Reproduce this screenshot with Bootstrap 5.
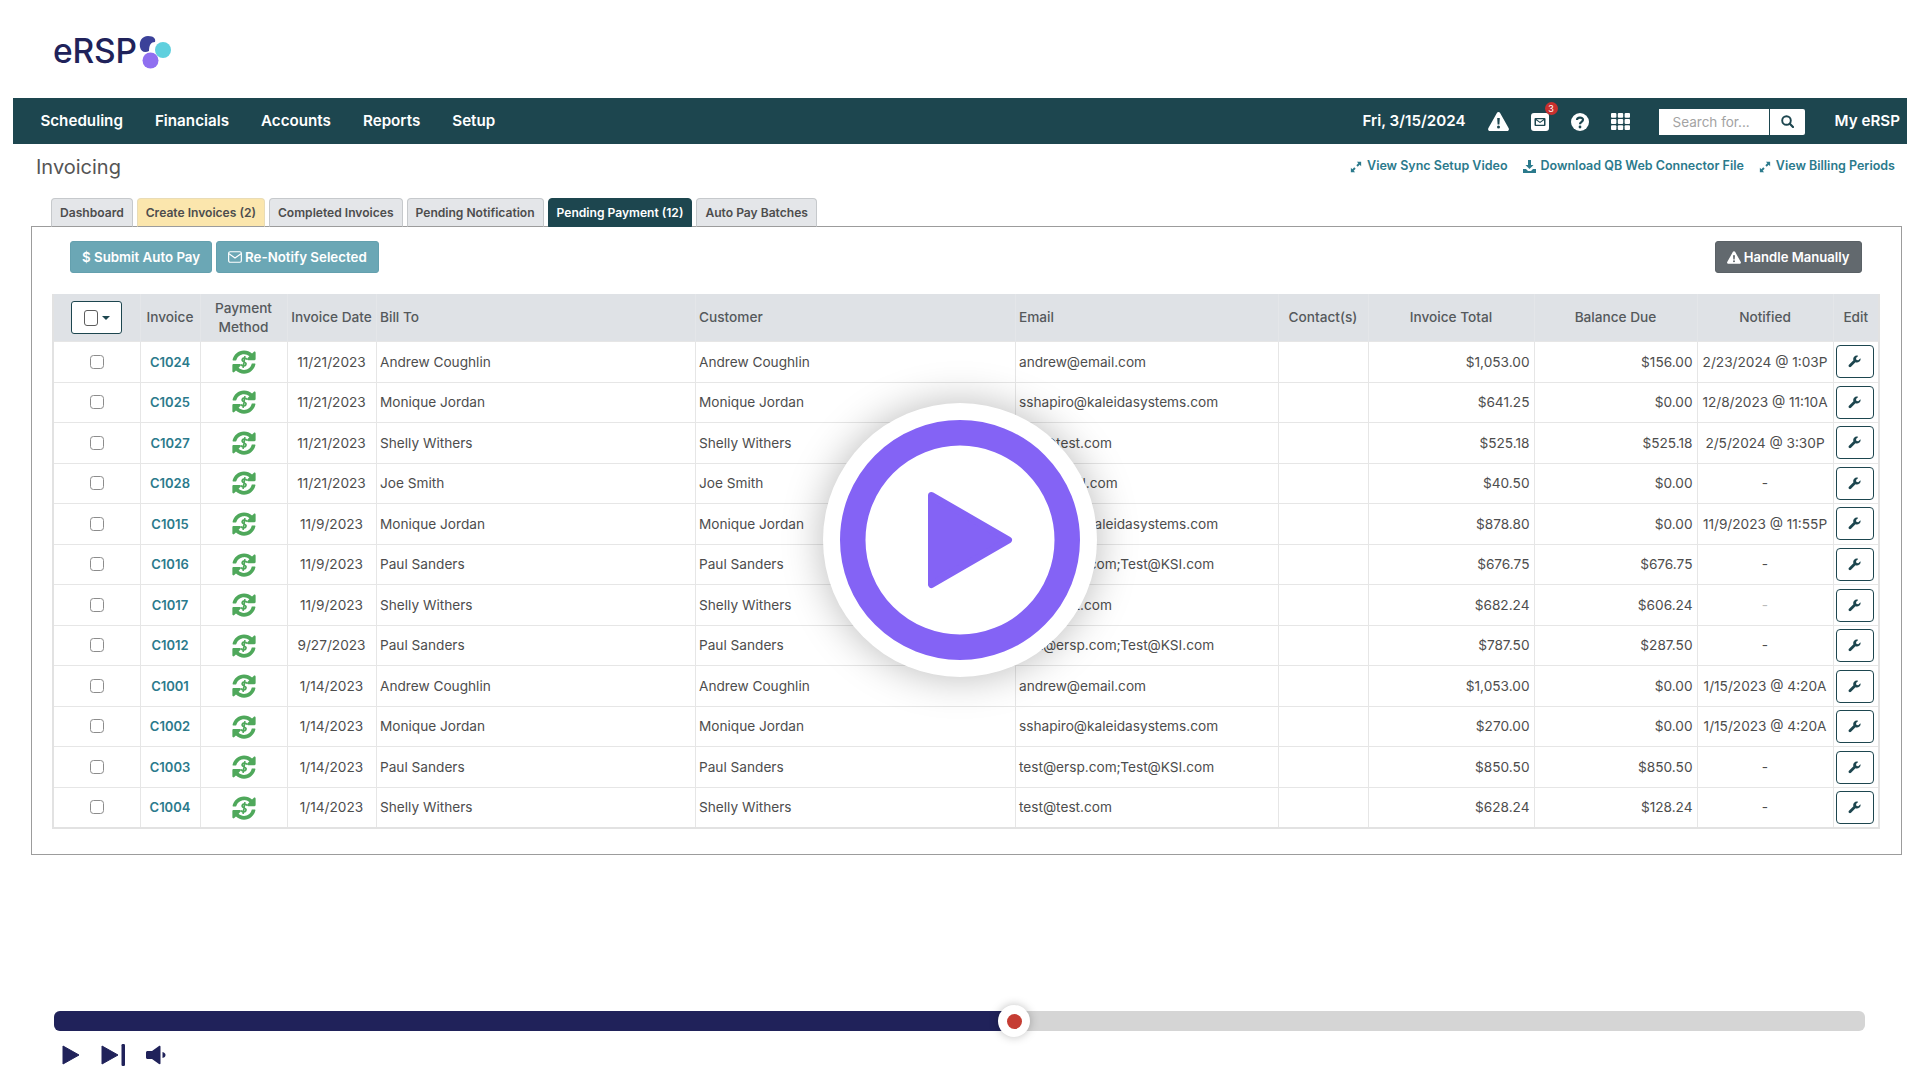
<!DOCTYPE html>
<html lang="en">
<head>
<meta charset="utf-8">
<title>eRSP Invoicing</title>
<link href="https://cdn.jsdelivr.net/npm/bootstrap@5.3.0/dist/css/bootstrap.min.css" rel="stylesheet">
<style>
html,body{height:100%}
body{font-family:Inter,"Liberation Sans",sans-serif;background:#fff;color:#4d4d4d;overflow:hidden;position:relative;width:1920px;height:1080px}
.logo-row{height:98px;padding:36px 0 0 53px;gap:2px;align-items:flex-start}
.logo-word{font-size:33.500px;font-weight:500;line-height:30px;color:#20225a;letter-spacing:-.2px}
.top-bar{margin:0 13px;height:46px;background:#1d464f;color:#fff;padding:1px 7px 0 27.400px;font-weight:600;font-size:15.200px}
.top-menu{gap:32px}
.top-menu a{color:#fff;text-decoration:none}
.top-tools{align-items:center}
.tool-date{margin-right:22px}
.tool-icon{display:block;margin-right:22px;position:relative}
.mail-wrap{width:18px;height:18px}
.mail-count{position:absolute;top:-11px;right:-9px;width:13px;height:13px;border-radius:50%;background:#c8302e;color:#fff;font-size:9px;line-height:13px;text-align:center;font-weight:400;padding:0}
.grid-icon{margin-right:21px}
.search-box{width:147.500px;height:26px;margin:0 28.500px 0 8px;flex-wrap:nowrap}
.search-box .form-control{height:26px;border:0;border-radius:0;font-size:13.500px;padding:0 14px;width:111.500px;flex:none;color:#555}
.search-box .form-control::placeholder{color:#a3a3a3}
.search-box .btn{width:36px;height:26px;padding:0;background:#fff;border:0;border-left:1px solid #1d464f;border-radius:0 2px 2px 0;display:flex;align-items:center;justify-content:center}
.title-row{height:54px;padding:0 25px 9px 36px;align-items:center}
.page-title{font-size:20px;font-weight:400;color:#555;margin:0}
.quick-links{gap:15px;font-size:12.500px;font-weight:600}
.quick-links a{color:#2b7a8c;text-decoration:none;display:flex;align-items:center;gap:5px}
.tab-strip{margin:0 0 0 51px;gap:4px;border:0;position:relative;z-index:1;height:29px}
.tab-strip .nav-link{height:29px;padding:0 8px;line-height:28px;font-size:12.080px;font-weight:600;color:#4d4d4d;background:#e4e6e9;border:1px solid #c6c9cc;border-bottom:1px solid #9c9c9c;border-radius:4px 4px 0 0;margin:0}
.tab-strip .nav-link.tab-warn{background:#fbe6ad;border-color:#e9dcb6 #e9dcb6 #9c9c9c}
.tab-strip .nav-link.active{background:#1d464f;color:#fff;border-color:#1d464f}
.work-panel{margin:-1px 18.500px 0 31px;height:629px;border:1px solid #9c9c9c;padding:14px 18px 0 20px;background:#fff}
.act-row{height:32px;margin:0 21px 0 18px}
.act-row .btn{height:32px;padding:0 11px;font-size:13.300px;font-weight:600;line-height:30px;border-radius:3px;display:inline-flex;align-items:center;gap:3px;color:#fff}
.act-row .act-gray{font-size:13.100px;background:#62696e;border:1px solid #5a6166}
.act-teal{background:#6ba7b5;border:1px solid #64a0ae}
.act-gap{gap:4px}
.bill-grid{table-layout:fixed;width:1826px;margin:21px 0 0 0;border-collapse:collapse;font-size:13.650px;color:#4d4d4d;border:2px solid #e2e2e2;border-top:0}
.bill-grid th{background:#dfe2e6;font-weight:500;height:47.500px;line-height:18.500px;padding:0 3px;text-align:center;color:#55595c;border:1px solid #e4e6e9;border-width:0 1px}
.bill-grid td{height:40.550px;padding:0 4px;border:1px solid #e6e6e6;vertical-align:middle;background:#fff}
.bill-grid .txt-l{text-align:left;padding-left:3.500px}
.bill-grid .txt-r{text-align:right}
.bill-grid .txt-c{text-align:center}
.bill-grid .edit-cell{padding:0 6px 0 2px;text-align:center}
.bill-grid a{color:#2b7a8c;font-weight:600;text-decoration:none;font-size:13px}
.faded-mark{color:#bbb}
.sel-btn{width:51px;height:33px;padding:0;background:#fff;border:1px solid #1d464f;border-radius:3px;display:inline-flex;align-items:center;justify-content:center;gap:4px}
.sel-box{width:14px;height:16px;border:1.500px solid #5d5d5d;border-radius:3px;display:block}
.sel-caret{width:0;height:0;border:4px solid transparent;border-top:4.500px solid #1d464f;border-bottom:0}
.row-check{width:14px;height:14px;margin:3px 0 0;border:1px solid #8c8c8c;border-radius:3px}
.edit-btn{width:38px;height:33px;padding:0;background:#fff;border:1px solid #1d464f;border-radius:4px;display:inline-flex;align-items:center;justify-content:center}
.player-zone{margin:156px 55px 0 54px;height:70px}
.seek-track{height:20px;background:#d5d5d5;border-radius:6px;position:relative}
.seek-fill{height:20px;width:960px;background:#20225a;border-radius:6px 0 0 6px}
.seek-thumb{position:absolute;left:944px;top:-6px;width:32px;height:32px;border-radius:50%;background:#fff;box-shadow:0 0 10px rgba(0,0,0,.25);display:flex;align-items:center;justify-content:center}
.seek-dot{width:15px;height:15px;border-radius:50%;background:#c53d33;display:block}
.player-keys{margin:13px 0 0 8px;align-items:center}
.key-play{margin-right:21px}
.key-next{margin-right:20px}
.big-play{position:absolute;left:823px;top:403px;width:274px;height:274px;border-radius:50%;background:#fff;box-shadow:0 0 42px rgba(0,0,0,.28);display:flex;align-items:center;justify-content:center}
</style>
</head>
<body>
<svg width="0" height="0" class="d-block position-absolute">
<defs>
<symbol id="sync" viewBox="0 0 512 512">
<path fill="#4fa85b" d="M370.720 133.280C339.458 104.008 298.888 87.962 255.848 88c-77.458.068-144.328 53.178-162.791 126.850-1.344 5.363-6.122 9.150-11.651 9.150H24.103c-7.498 0-13.194-6.807-11.807-14.176C33.933 94.924 134.813 8 256 8c66.448 0 126.791 26.136 171.315 68.685L463.030 40.970C478.149 25.851 504 36.559 504 57.941V192c0 13.255-10.745 24-24 24H345.941c-21.382 0-32.090-25.851-16.971-40.971l41.750-41.749zM32 296h134.059c21.382 0 32.090 25.851 16.971 40.971l-41.750 41.750c31.262 29.273 71.835 45.319 114.876 45.280 77.418-.070 144.315-53.144 162.787-126.849 1.344-5.363 6.122-9.150 11.651-9.150h57.304c7.498 0 13.194 6.807 11.807 14.176C478.067 417.076 377.187 504 256 504c-66.448 0-126.791-26.136-171.315-68.685L48.970 471.030C33.851 486.149 8 475.441 8 454.059V320c0-13.255 10.745-24 24-24z"/>
<path fill="none" stroke="#4fa85b" stroke-width="36" d="M318 205C308 178 275 170 250 174 218 179 205 212 226 236 244 256 288 258 298 285 307 314 282 338 252 340 226 342 203 330 194 306M276 130 236 382"/>
</symbol>
<symbol id="wrench" viewBox="0 0 16 16">
<path fill="#1d464f" d="M15.300 3.900 12.700 6.500 10.400 6 9.900 3.700 12.500 1.100C10.800.4 8.800.8 7.600 2 6.400 3.200 6.100 5 6.700 6.500L1.200 12C.5 12.700.5 13.800 1.200 14.500 1.900 15.200 3 15.200 3.700 14.500L9.200 9C10.800 9.700 12.700 9.400 14 8.100 15.300 6.900 15.800 5.400 15.300 3.900Z"/>
</symbol>
<symbol id="expand" viewBox="0 0 14 14">
<path fill="#2b7a8c" d="M8 1h5v5L11.300 4.300 9 6.600 7.400 5 9.700 2.700ZM6 13H1V8L2.700 9.700 5 7.400 6.600 9 4.300 11.300Z"/>
</symbol>
</defs>
</svg>

<header class="logo-row d-flex">
  <span class="logo-word">eRSP</span>
  <svg width="32" height="34" viewBox="0 0 32 34" aria-hidden="true">
    <path fill="#3b4199" d="M1 11C0 5 3 0 9 0 15 0 17 3 16 6 12 6 10 9 10 15 6 17 2 16 1 11Z"/>
    <circle fill="#5fd0de" cx="24" cy="14" r="8"/>
    <circle fill="#8f6ff0" cx="11.500" cy="24.500" r="8"/>
  </svg>
</header>

<nav class="navbar top-bar d-flex justify-content-between flex-nowrap">
  <div class="top-menu d-flex">
    <a href="#">Scheduling</a><a href="#">Financials</a><a href="#">Accounts</a><a href="#">Reports</a><a href="#">Setup</a>
  </div>
  <div class="top-tools d-flex">
    <span class="tool-date">Fri, 3/15/2024</span>
    <svg class="tool-icon" width="21" height="19" viewBox="0 0 21 19"><path fill="#fff" fill-rule="evenodd" d="M10.500 0C11.200 0 11.800.4 12.100 1L20.700 16.300C21.300 17.500 20.500 19 19.100 19H1.900C.5 19-.3 17.500.3 16.300L8.900 1C9.200.4 9.800 0 10.500 0ZM9.200 6 9.600 12.500H11.400L11.800 6ZM10.500 13.500A1.500 1.500 0 1 0 10.500 16.500 1.500 1.500 0 1 0 10.500 13.500Z"/></svg>
    <span class="tool-icon mail-wrap">
      <svg class="d-block" width="18" height="18" viewBox="0 0 18 18"><path fill="#fff" fill-rule="evenodd" d="M3 0H15A3 3 0 0 1 18 3V15A3 3 0 0 1 15 18H3A3 3 0 0 1 0 15V3A3 3 0 0 1 3 0ZM4.500 5A1 1 0 0 0 3.500 6V12A1 1 0 0 0 4.500 13H13.500A1 1 0 0 0 14.500 12V6A1 1 0 0 0 13.500 5ZM5 7.300 9 10 13 7.300V11.700H5ZM5.500 6.300H12.500L9 8.700Z"/></svg>
      <span class="badge mail-count">3</span>
    </span>
    <svg class="tool-icon" width="18" height="18" viewBox="0 0 18 18"><circle cx="9" cy="9" r="9" fill="#fff"/><path fill="none" stroke="#1d464f" stroke-width="2.200" d="M6 7C6 3.800 12 3.800 12 6.800 12 8.800 9 8.800 9 11.200"/><circle cx="9" cy="14" r="1.400" fill="#1d464f"/></svg>
    <svg class="tool-icon grid-icon" width="19" height="17" viewBox="0 0 19 17"><g fill="#fff"><rect x="0" width="5.400" height="4.800" rx="1"/><rect x="6.800" width="5.400" height="4.800" rx="1"/><rect x="13.600" width="5.400" height="4.800" rx="1"/><rect x="0" y="6.100" width="5.400" height="4.800" rx="1"/><rect x="6.800" y="6.100" width="5.400" height="4.800" rx="1"/><rect x="13.600" y="6.100" width="5.400" height="4.800" rx="1"/><rect x="0" y="12.200" width="5.400" height="4.800" rx="1"/><rect x="6.800" y="12.200" width="5.400" height="4.800" rx="1"/><rect x="13.600" y="12.200" width="5.400" height="4.800" rx="1"/></g></svg>
    <form class="input-group search-box" onsubmit="return false">
      <input class="form-control" type="text" placeholder="Search for...">
      <button class="btn" type="button" aria-label="Search"><svg width="13" height="13" viewBox="0 0 13 13"><circle cx="5.500" cy="5.500" r="4.300" fill="none" stroke="#1d464f" stroke-width="1.900"/><path stroke="#1d464f" stroke-width="2.200" stroke-linecap="round" d="M8.800 8.800 12 12"/></svg></button>
    </form>
    <span>My eRSP</span>
  </div>
</nav>

<div class="title-row d-flex justify-content-between">
  <h1 class="page-title">Invoicing</h1>
  <div class="quick-links d-flex">
    <a href="#"><svg width="12" height="12"><use href="#expand"/></svg>View Sync Setup Video</a>
    <a href="#"><svg width="13" height="13" viewBox="0 0 13 13"><path fill="#2b7a8c" d="M5 0H8V5H10.500L6.500 9 2.500 5H5ZM0 9H3L5 11H8L10 9H13V13H0Z"/></svg>Download QB Web Connector File</a>
    <a href="#"><svg width="12" height="12"><use href="#expand"/></svg>View Billing Periods</a>
  </div>
</div>

<ul class="nav nav-tabs tab-strip">
  <li class="nav-item"><a class="nav-link" href="#">Dashboard</a></li>
  <li class="nav-item"><a class="nav-link tab-warn" href="#">Create Invoices (2)</a></li>
  <li class="nav-item"><a class="nav-link" href="#">Completed Invoices</a></li>
  <li class="nav-item"><a class="nav-link" href="#">Pending Notification</a></li>
  <li class="nav-item"><a class="nav-link active" href="#">Pending Payment (12)</a></li>
  <li class="nav-item"><a class="nav-link" href="#">Auto Pay Batches</a></li>
</ul>

<main class="work-panel">
  <div class="act-row d-flex justify-content-between">
    <div class="d-flex act-gap">
      <button type="button" class="btn act-teal">$ Submit Auto Pay</button>
      <button type="button" class="btn act-teal"><svg width="14" height="12" viewBox="0 0 13 11"><rect x=".6" y=".6" width="11.800" height="9.800" rx="1.400" fill="none" stroke="#fff" stroke-width="1.100"/><path d="M1 2.500 6.500 6.500 12 2.500" fill="none" stroke="#fff" stroke-width="1.100"/></svg>Re-Notify Selected</button>
    </div>
    <button type="button" class="btn act-gray"><svg width="14" height="13" viewBox="0 0 21 19"><path fill="#fff" fill-rule="evenodd" d="M10.500 0C11.200 0 11.800.4 12.100 1L20.700 16.300C21.300 17.500 20.500 19 19.100 19H1.900C.5 19-.3 17.500.3 16.300L8.900 1C9.200.4 9.800 0 10.500 0ZM9 6 9.500 12.500H11.500L12 6ZM10.500 13.500A1.500 1.500 0 1 0 10.500 16.500 1.500 1.500 0 1 0 10.500 13.500Z"/></svg>Handle Manually</button>
  </div>

  <table class="bill-grid">
    <colgroup>
      <col style="width:87px"><col style="width:60px"><col style="width:87px"><col style="width:89px"><col style="width:319px"><col style="width:320px"><col style="width:263px"><col style="width:90px"><col style="width:166px"><col style="width:163px"><col style="width:136px"><col style="width:46px">
    </colgroup>
    <thead>
      <tr>
        <th><button type="button" class="sel-btn" aria-label="Select"><span class="sel-box"></span><span class="sel-caret"></span></button></th>
        <th>Invoice</th><th>Payment<br>Method</th><th>Invoice Date</th><th class="txt-l">Bill To</th><th class="txt-l">Customer</th><th class="txt-l">Email</th><th>Contact(s)</th><th>Invoice Total</th><th>Balance Due</th><th>Notified</th><th>Edit</th>
      </tr>
    </thead>
    <tbody>
      <tr><td class="txt-c"><input class="form-check-input row-check" type="checkbox"></td><td class="txt-c"><a href="#">C1024</a></td><td class="txt-c"><svg class="d-block mx-auto" width="24" height="24"><use href="#sync"/></svg></td><td class="txt-c">11/21/2023</td><td class="txt-l">Andrew Coughlin</td><td class="txt-l">Andrew Coughlin</td><td class="txt-l">andrew@email.com</td><td></td><td class="txt-r">$1,053.00</td><td class="txt-r">$156.00</td><td class="txt-c">2/23/2024 @ 1:03P</td><td class="edit-cell"><button type="button" class="edit-btn" aria-label="Edit"><svg width="13" height="13"><use href="#wrench"/></svg></button></td></tr>
      <tr><td class="txt-c"><input class="form-check-input row-check" type="checkbox"></td><td class="txt-c"><a href="#">C1025</a></td><td class="txt-c"><svg class="d-block mx-auto" width="24" height="24"><use href="#sync"/></svg></td><td class="txt-c">11/21/2023</td><td class="txt-l">Monique Jordan</td><td class="txt-l">Monique Jordan</td><td class="txt-l">sshapiro@kaleidasystems.com</td><td></td><td class="txt-r">$641.25</td><td class="txt-r">$0.00</td><td class="txt-c">12/8/2023 @ 11:10A</td><td class="edit-cell"><button type="button" class="edit-btn" aria-label="Edit"><svg width="13" height="13"><use href="#wrench"/></svg></button></td></tr>
      <tr><td class="txt-c"><input class="form-check-input row-check" type="checkbox"></td><td class="txt-c"><a href="#">C1027</a></td><td class="txt-c"><svg class="d-block mx-auto" width="24" height="24"><use href="#sync"/></svg></td><td class="txt-c">11/21/2023</td><td class="txt-l">Shelly Withers</td><td class="txt-l">Shelly Withers</td><td class="txt-l">test@test.com</td><td></td><td class="txt-r">$525.18</td><td class="txt-r">$525.18</td><td class="txt-c">2/5/2024 @ 3:30P</td><td class="edit-cell"><button type="button" class="edit-btn" aria-label="Edit"><svg width="13" height="13"><use href="#wrench"/></svg></button></td></tr>
      <tr><td class="txt-c"><input class="form-check-input row-check" type="checkbox"></td><td class="txt-c"><a href="#">C1028</a></td><td class="txt-c"><svg class="d-block mx-auto" width="24" height="24"><use href="#sync"/></svg></td><td class="txt-c">11/21/2023</td><td class="txt-l">Joe Smith</td><td class="txt-l">Joe Smith</td><td class="txt-l">joe@email.com</td><td></td><td class="txt-r">$40.50</td><td class="txt-r">$0.00</td><td class="txt-c">-</td><td class="edit-cell"><button type="button" class="edit-btn" aria-label="Edit"><svg width="13" height="13"><use href="#wrench"/></svg></button></td></tr>
      <tr><td class="txt-c"><input class="form-check-input row-check" type="checkbox"></td><td class="txt-c"><a href="#">C1015</a></td><td class="txt-c"><svg class="d-block mx-auto" width="24" height="24"><use href="#sync"/></svg></td><td class="txt-c">11/9/2023</td><td class="txt-l">Monique Jordan</td><td class="txt-l">Monique Jordan</td><td class="txt-l">sshapiro@kaleidasystems.com</td><td></td><td class="txt-r">$878.80</td><td class="txt-r">$0.00</td><td class="txt-c">11/9/2023 @ 11:55P</td><td class="edit-cell"><button type="button" class="edit-btn" aria-label="Edit"><svg width="13" height="13"><use href="#wrench"/></svg></button></td></tr>
      <tr><td class="txt-c"><input class="form-check-input row-check" type="checkbox"></td><td class="txt-c"><a href="#">C1016</a></td><td class="txt-c"><svg class="d-block mx-auto" width="24" height="24"><use href="#sync"/></svg></td><td class="txt-c">11/9/2023</td><td class="txt-l">Paul Sanders</td><td class="txt-l">Paul Sanders</td><td class="txt-l">test@ersp.com;Test@KSI.com</td><td></td><td class="txt-r">$676.75</td><td class="txt-r">$676.75</td><td class="txt-c">-</td><td class="edit-cell"><button type="button" class="edit-btn" aria-label="Edit"><svg width="13" height="13"><use href="#wrench"/></svg></button></td></tr>
      <tr><td class="txt-c"><input class="form-check-input row-check" type="checkbox"></td><td class="txt-c"><a href="#">C1017</a></td><td class="txt-c"><svg class="d-block mx-auto" width="24" height="24"><use href="#sync"/></svg></td><td class="txt-c">11/9/2023</td><td class="txt-l">Shelly Withers</td><td class="txt-l">Shelly Withers</td><td class="txt-l">test@test.com</td><td></td><td class="txt-r">$682.24</td><td class="txt-r">$606.24</td><td class="txt-c faded-mark">-</td><td class="edit-cell"><button type="button" class="edit-btn" aria-label="Edit"><svg width="13" height="13"><use href="#wrench"/></svg></button></td></tr>
      <tr><td class="txt-c"><input class="form-check-input row-check" type="checkbox"></td><td class="txt-c"><a href="#">C1012</a></td><td class="txt-c"><svg class="d-block mx-auto" width="24" height="24"><use href="#sync"/></svg></td><td class="txt-c">9/27/2023</td><td class="txt-l">Paul Sanders</td><td class="txt-l">Paul Sanders</td><td class="txt-l">test@ersp.com;Test@KSI.com</td><td></td><td class="txt-r">$787.50</td><td class="txt-r">$287.50</td><td class="txt-c">-</td><td class="edit-cell"><button type="button" class="edit-btn" aria-label="Edit"><svg width="13" height="13"><use href="#wrench"/></svg></button></td></tr>
      <tr><td class="txt-c"><input class="form-check-input row-check" type="checkbox"></td><td class="txt-c"><a href="#">C1001</a></td><td class="txt-c"><svg class="d-block mx-auto" width="24" height="24"><use href="#sync"/></svg></td><td class="txt-c">1/14/2023</td><td class="txt-l">Andrew Coughlin</td><td class="txt-l">Andrew Coughlin</td><td class="txt-l">andrew@email.com</td><td></td><td class="txt-r">$1,053.00</td><td class="txt-r">$0.00</td><td class="txt-c">1/15/2023 @ 4:20A</td><td class="edit-cell"><button type="button" class="edit-btn" aria-label="Edit"><svg width="13" height="13"><use href="#wrench"/></svg></button></td></tr>
      <tr><td class="txt-c"><input class="form-check-input row-check" type="checkbox"></td><td class="txt-c"><a href="#">C1002</a></td><td class="txt-c"><svg class="d-block mx-auto" width="24" height="24"><use href="#sync"/></svg></td><td class="txt-c">1/14/2023</td><td class="txt-l">Monique Jordan</td><td class="txt-l">Monique Jordan</td><td class="txt-l">sshapiro@kaleidasystems.com</td><td></td><td class="txt-r">$270.00</td><td class="txt-r">$0.00</td><td class="txt-c">1/15/2023 @ 4:20A</td><td class="edit-cell"><button type="button" class="edit-btn" aria-label="Edit"><svg width="13" height="13"><use href="#wrench"/></svg></button></td></tr>
      <tr><td class="txt-c"><input class="form-check-input row-check" type="checkbox"></td><td class="txt-c"><a href="#">C1003</a></td><td class="txt-c"><svg class="d-block mx-auto" width="24" height="24"><use href="#sync"/></svg></td><td class="txt-c">1/14/2023</td><td class="txt-l">Paul Sanders</td><td class="txt-l">Paul Sanders</td><td class="txt-l">test@ersp.com;Test@KSI.com</td><td></td><td class="txt-r">$850.50</td><td class="txt-r">$850.50</td><td class="txt-c">-</td><td class="edit-cell"><button type="button" class="edit-btn" aria-label="Edit"><svg width="13" height="13"><use href="#wrench"/></svg></button></td></tr>
      <tr><td class="txt-c"><input class="form-check-input row-check" type="checkbox"></td><td class="txt-c"><a href="#">C1004</a></td><td class="txt-c"><svg class="d-block mx-auto" width="24" height="24"><use href="#sync"/></svg></td><td class="txt-c">1/14/2023</td><td class="txt-l">Shelly Withers</td><td class="txt-l">Shelly Withers</td><td class="txt-l">test@test.com</td><td></td><td class="txt-r">$628.24</td><td class="txt-r">$128.24</td><td class="txt-c">-</td><td class="edit-cell"><button type="button" class="edit-btn" aria-label="Edit"><svg width="13" height="13"><use href="#wrench"/></svg></button></td></tr>
    </tbody>
  </table>
</main>

<section class="player-zone">
  <div class="seek-track">
    <div class="seek-fill"></div>
    <span class="seek-thumb"><span class="seek-dot"></span></span>
  </div>
  <div class="player-keys d-flex">
    <svg class="key-play" width="18" height="20" viewBox="0 0 18 20"><path fill="#20225a" stroke="#20225a" stroke-linejoin="round" d="M1 1 17 10 1 19Z"/></svg>
    <svg class="key-next" width="25" height="22" viewBox="0 0 25 22"><path fill="#20225a" stroke="#20225a" stroke-linejoin="round" d="M1 2 17 11 1 20Z"/><rect x="20.500" y="0" width="3.500" height="22" rx="1.200" fill="#20225a"/></svg>
    <svg width="20" height="20" viewBox="0 0 20 20"><path fill="#20225a" d="M1.500 6H6L13 1C13.700.6 14.500 1 14.500 1.800V18.200C14.500 19 13.700 19.400 13 19L6 14H1.500C.7 14 0 13.300 0 12.500V7.500C0 6.700.7 6 1.500 6Z"/><path fill="#20225a" d="M16.500 7C18.500 7.500 19.500 8.500 19.500 10 19.500 11.500 18.500 12.500 16.500 13Z"/></svg>
  </div>
</section>

<div class="big-play" aria-label="Play video">
  <svg width="240" height="240" viewBox="0 0 240 240"><circle cx="120" cy="120" r="107.250" fill="#fff" stroke="#8463f5" stroke-width="25.500"/><path fill="#8463f5" stroke="#8463f5" stroke-width="7" stroke-linejoin="round" d="M91.500 75.500 168.500 120 91.500 164.500Z"/></svg>
</div>
<script src="https://cdn.jsdelivr.net/npm/bootstrap@5.3.0/dist/js/bootstrap.bundle.min.js"></script>
</body>
</html>
